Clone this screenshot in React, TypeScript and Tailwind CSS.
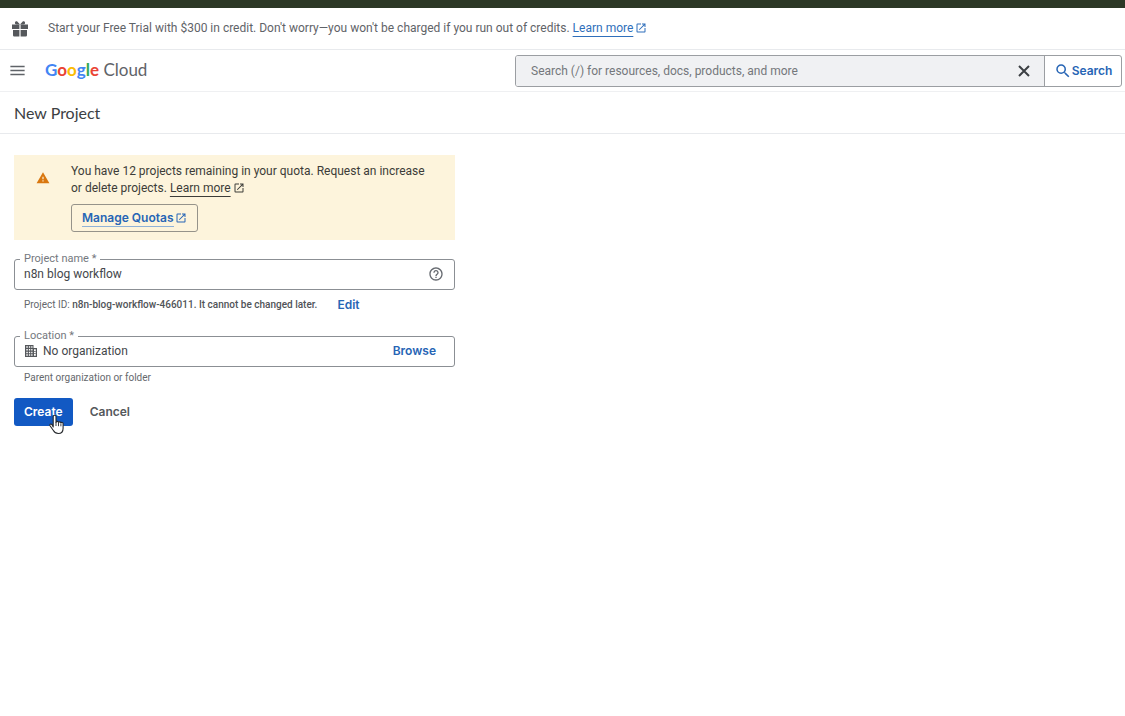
import { useState } from "react";
import type { ReactNode } from "react";
import { MdMenu, MdOpenInNew, MdOutlineHelpOutline, MdSearch, MdWarning } from "react-icons/md";

function GiftIcon() {
  return (
    <svg viewBox="0 0 18 18" className="size-[18px] shrink-0 fill-[#55585c]" aria-hidden="true">
      <path d="M1 4.500h7.400v4.500H1zM9.600 4.500H17V9H9.600zM2 10h6.400v6.500H3.200A1.200 1.200 0 0 1 2 15.300zM9.600 10H16v5.300a1.200 1.200 0 0 1-1.200 1.200H9.600z" />
      <path
        d="M9 4.500 6.300 1.600C5.300.800 3.900 1.600 3.900 2.800c0 .9.700 1.700 1.600 1.700zM9 4.500l2.700-2.900c1-.8 2.400 0 2.400 1.200 0 .9-.7 1.700-1.600 1.700z"
      />
    </svg>
  );
}

function CloseIcon() {
  return (
    <svg viewBox="0 0 16 16" className="size-4" aria-hidden="true">
      <path d="M3 3l10 10M13 3L3 13" stroke="#3c4043" strokeWidth="2" fill="none" />
    </svg>
  );
}

function OrganizationIcon() {
  return (
    <svg viewBox="0 0 14 14" className="size-[14px] shrink-0 fill-[#55585c]" aria-hidden="true">
      <path
        fillRule="evenodd"
        d="M1 1h8.500v3H13v9H1zM2.300 2.300v1.500h1.500V2.300zM4.900 2.300v1.500h1.300V2.300zM7.200 2.300v1.500h1.300V2.300zM2.300 5v1.500h1.500V5zM4.900 5v1.500h1.300V5zM7.200 5v1.500h1.300V5zM2.300 7.700v1.500h1.500V7.700zM4.900 7.700v1.500h1.300V7.700zM7.200 7.700v1.500h1.300V7.700zM2.300 10.300v1.500h1.500v-1.500zM4.900 10.300v1.500h1.300v-1.500zM7.200 10.300v1.500h1.300v-1.500zM10 5.200v6.600h1.800V5.200z"
      />
      <path d="M10 7h1.800v.8H10zM10 9.300h1.800v.8H10z" />
    </svg>
  );
}

function HandPointer() {
  return (
    <svg viewBox="0 0 16 21" className="pointer-events-none absolute left-[34px] top-4 h-[21px] w-4" aria-hidden="true">
      <path
        d="M5.200 13V2.600a1.400 1.400 0 0 1 2.800 0v5.600a1.300 1.300 0 0 1 2.500.3 1.300 1.300 0 0 1 2.400.5 1.200 1.200 0 0 1 2.200.8v4.400c0 2.800-1.500 5.300-4.800 5.300-2.700 0-3.800-1-4.900-3L2 11.800c-.8-1.500 1-2.400 1.900-1.200z"
        fill="#fff"
        stroke="#25282c"
        strokeWidth="1.100"
        strokeLinejoin="round"
      />
      <path d="M8 8v4M10.500 9v3.200M12.900 9.600v2.700" stroke="#25282c" strokeWidth=".9" />
    </svg>
  );
}

function OutlinedField({ id, label, children }: { id: string; label: string; children: ReactNode }) {
  return (
    <fieldset className="rounded-[3px] border border-[#8b8f94] px-[5px]">
      <legend className="px-1 text-[11px] leading-3 text-[#74787e]">
        <label htmlFor={id}>{label} *</label>
      </legend>
      <div className="flex h-6 items-center pb-1.5 pl-1 pr-[5px]">{children}</div>
    </fieldset>
  );
}

const productFont = "font-['Google_Sans','Lato',sans-serif]";
const actionFont = "font-['Inter',sans-serif] text-xs font-semibold";

export default function App() {
  const [name, setName] = useState("n8n blog workflow");
  const [query, setQuery] = useState("");

  return (
    <div className="min-h-screen bg-white font-['Roboto',sans-serif] text-xs text-[#44474b]">
      <div className="h-2 bg-[#2c3826]" />

      <div className="flex h-[42px] items-center gap-[19px] border-b border-[#e8eaed] px-[11px] text-[#5f6368]">
        <GiftIcon />
        <p className="pb-px">
          Start your Free Trial with $300 in credit. Don't worry—you won't be charged if you run out of credits.{" "}
          <a href="#trial" className="text-[#2f6fbb]">
            <span className="underline underline-offset-4">Learn more</span>
            <MdOpenInNew className="ml-0.5 inline size-3 align-[-2px]" />
          </a>
        </p>
      </div>

      <header className="flex h-[42px] items-center border-b border-[#eff0f2] pl-2 pr-[3px]">
        <button type="button" aria-label="Main menu" className="text-[#5f6368]">
          <MdMenu className="size-[19px]" />
        </button>
        <a href="#home" className={`ml-[18px] text-[17px] ${productFont}`}>
          <span className="font-bold">
            <span className="text-[#4285f4]">G</span>
            <span className="text-[#ea4335]">o</span>
            <span className="text-[#fbbc04]">o</span>
            <span className="text-[#4285f4]">g</span>
            <span className="text-[#34a853]">l</span>
            <span className="text-[#ea4335]">e</span>
          </span>
          <span className="text-[#5f6368]"> Cloud</span>
        </a>
        <form
          role="search"
          onSubmit={(e) => e.preventDefault()}
          className="ml-auto flex h-8 w-[607px] items-stretch overflow-hidden rounded-[3px] border border-[#9b9ea2]"
        >
          <div className="flex flex-1 items-center bg-[#f0f1f3] pl-[15px] pr-3">
            <input
              aria-label="Search resources"
              value={query}
              onChange={(e) => setQuery(e.target.value)}
              placeholder="Search (/) for resources, docs, products, and more"
              className="flex-1 bg-transparent outline-none placeholder:text-[#74777b]"
            />
            <button type="button" aria-label="Clear search" onClick={() => setQuery("")}>
              <CloseIcon />
            </button>
          </div>
          <button
            type="submit"
            className={`flex w-[77px] items-center justify-center border-l border-[#9b9ea2] text-[#2765b5] ${actionFont}`}
          >
            <MdSearch className="size-[18px]" />
            Search
          </button>
        </form>
      </header>

      <div className="flex h-[42px] items-center border-b border-[#e8eaed] px-[14px]">
        <h1 className={`text-base text-[#3c4043] ${productFont}`}>New Project</h1>
      </div>

      <main className="max-w-[469px] px-[14px] pt-[21px]">
        <section className="flex h-[85px] gap-[21px] bg-[#fdf4dc] pl-[22px] pr-6 pt-2">
          <MdWarning className="mt-2 size-[14px] shrink-0 text-[#d9770f]" />
          <div>
            <p className="leading-[17px] text-[#3c3c38]">
              You have 12 projects remaining in your quota. Request an increase or delete projects.{" "}
              <a href="#quota-help">
                <span className="underline underline-offset-4">Learn more</span>
                <MdOpenInNew className="ml-0.5 inline size-3 align-[-2px]" />
              </a>
            </p>
            <a
              href="#quotas"
              className={`mt-[7px] inline-flex h-7 items-center gap-px rounded-[3px] border border-[#96938a] px-[10px] text-[#2765b5] ${actionFont}`}
            >
              <span className="border-b border-[#8fb2d8] leading-4">Manage Quotas</span>
              <MdOpenInNew className="size-3" />
            </a>
          </div>
        </section>

        <form onSubmit={(e) => e.preventDefault()} className="mt-[13px]">
          <OutlinedField id="project-name" label="Project name">
            <input
              id="project-name"
              value={name}
              onChange={(e) => setName(e.target.value)}
              className="flex-1 bg-transparent outline-none"
            />
            <MdOutlineHelpOutline className="size-4 text-[#666a70]" />
          </OutlinedField>

          <p className="mt-[7px] flex items-center px-[10px] text-[10px] leading-4 text-[#65686c]">
            <span>
              Project ID: <span className="font-medium text-[#505357]">n8n-blog-workflow-466011. It cannot be changed later.</span>
            </span>
            <button type="button" className={`ml-5 text-[#2765b5] ${actionFont}`}>
              Edit
            </button>
          </p>

          <div className="mt-[17px]">
            <OutlinedField id="location" label="Location">
              <OrganizationIcon />
              <input id="location" readOnly value="No organization" className="ml-[5px] flex-1 bg-transparent outline-none" />
              <button type="button" className={`mr-2 text-[#2765b5] ${actionFont}`}>
                Browse
              </button>
            </OutlinedField>
          </div>

          <p className="mt-[3px] px-[10px] text-[10px] leading-4 text-[#65686c]">Parent organization or folder</p>

          <div className={`mt-3 flex items-center gap-[7px] ${actionFont}`}>
            <button type="submit" className="relative h-7 rounded-[3px] bg-[#1259c3] px-[10px] text-white">
              Create
              <HandPointer />
            </button>
            <button type="button" className="h-7 px-[10px] text-[#55585c]">
              Cancel
            </button>
          </div>
        </form>
      </main>
    </div>
  );
}
